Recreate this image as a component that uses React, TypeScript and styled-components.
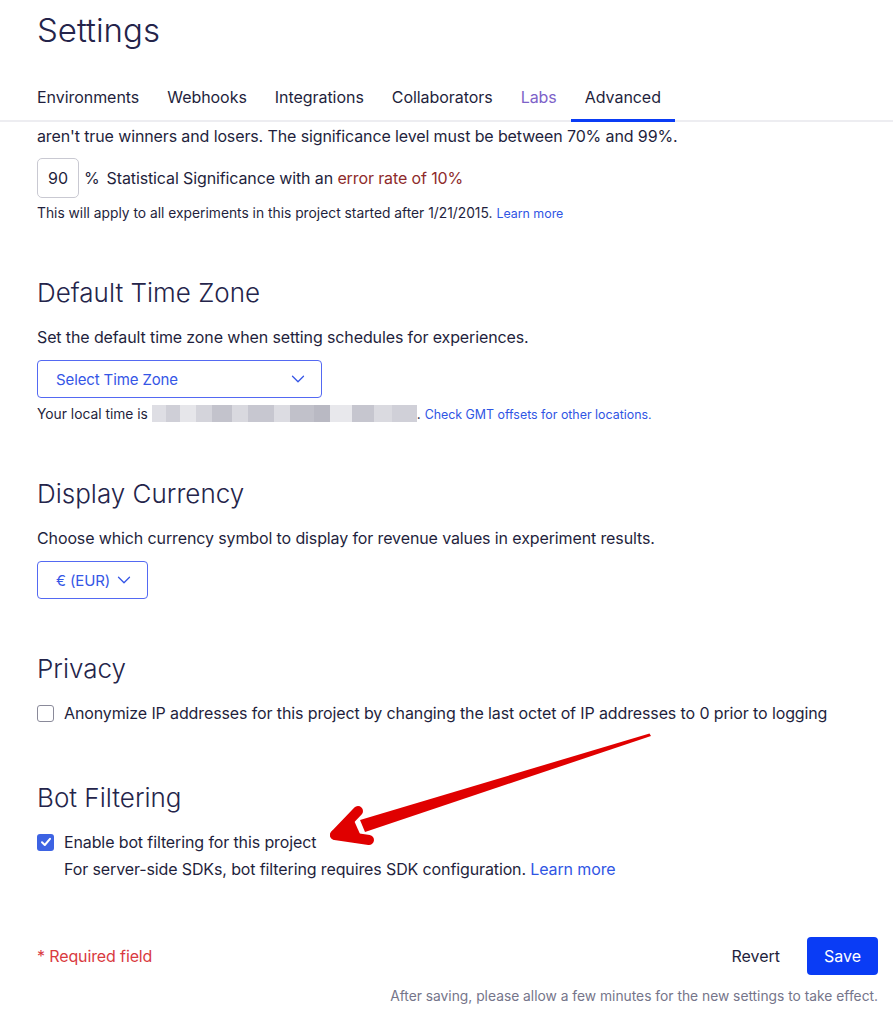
import React from 'react';
import styled, { createGlobalStyle } from 'styled-components';
import { ChevronDown } from 'lucide-react';

const GlobalStyle = createGlobalStyle`
  html, body {
    margin: 0;
    padding: 0;
    background: #ffffff;
  }
  body {
    font-family: Inter, "Noto Sans", "Liberation Sans", sans-serif;
    color: #1f1f3d;
    letter-spacing: -0.12px;
    -webkit-font-smoothing: antialiased;
  }
`;

const Page = styled.div`
  position: relative;
  width: 893px;
  height: 1024px;
  overflow: hidden;
  background: #fff;
`;

const Title = styled.h1`
  margin: 0;
  padding: 10px 0 0 37px;
  font-size: 33px;
  line-height: 40px;
  font-weight: 300;
  letter-spacing: 0;
  color: #24244a;
`;

const TabBar = styled.nav`
  display: flex;
  margin-top: 35px;
  padding-left: 23px;
  box-shadow: inset 0 -2px 0 #ededf1;
`;

const Tab = styled.div<{ active?: boolean; tone?: string }>`
  padding: 0 14px 10px;
  font-size: 16px;
  line-height: 24px;
  letter-spacing: -0.05px;
  color: ${p => p.tone || '#1f1f3d'};
  border-bottom: 3px solid ${p => (p.active ? '#0a3cf5' : 'transparent')};
`;

const Content = styled.main`
  padding: 2px 15px 0 37px;
`;

const Text = styled.p`
  margin: 0;
  font-size: 16px;
  line-height: 24px;
`;

const Small = styled.p`
  margin: 0;
  font-size: 13.8px;
  line-height: 18px;
  letter-spacing: 0;
`;

const SmallLink = styled.a`
  color: #2f55e4;
  font-size: 12.4px;
  text-decoration: none;
`;

const Link = styled.a`
  color: #2f55e4;
  text-decoration: none;
`;

const SigRow = styled.div`
  display: flex;
  align-items: center;
  margin: 10px 0 6px;
  font-size: 16px;
`;

const NumberBox = styled.div`
  width: 42px;
  height: 40px;
  box-sizing: border-box;
  border: 1px solid #c9c9d2;
  border-radius: 5px;
  display: flex;
  align-items: center;
  justify-content: center;
`;

const Percent = styled.span`
  margin: 0 7px 0 5px;
`;

const ErrorText = styled.span`
  color: #8e2b2b;
`;

const Section = styled.section<{ spacing?: number }>`
  margin-top: ${p => p.spacing ?? 54}px;
`;

const Heading = styled.h2`
  margin: 0 0 16px;
  font-size: 26px;
  line-height: 32px;
  font-weight: 300;
  letter-spacing: 0;
  color: #24244a;
`;

const Select = styled.div<{ width: number }>`
  width: ${p => p.width}px;
  height: 38px;
  box-sizing: border-box;
  margin: 11px 0 7px;
  padding: 0 12px 0 18px;
  border: 1px solid #5469f2;
  border-radius: 4px;
  display: flex;
  align-items: center;
  justify-content: space-between;
  color: #3556e6;
  font-size: 15px;
`;

const Blur = styled.span`
  display: inline-block;
  vertical-align: middle;
  width: 265px;
  height: 17px;
  margin-top: -3px;
  background:
    linear-gradient(90deg,
      #dedee4 0 14px, #cfcfd7 14px 28px, #e6e6ea 28px 44px, #d4d4db 44px 60px,
      #c3c3cc 60px 80px, #d9d9df 80px 96px, #c7c7d0 96px 122px, #dcdce2 122px 138px,
      #c1c1ca 138px 162px, #b9b9c3 162px 178px, #e8e8ec 178px 200px, #c6c6cf 200px 222px,
      #dadae0 222px 240px, #d0d0d8 240px 265px);
`;

const CheckRow = styled.label`
  display: flex;
  align-items: center;
  gap: 10px;
  font-size: 16px;
  line-height: 24px;
`;

const Box = styled.span<{ checked?: boolean }>`
  width: 17px;
  height: 17px;
  box-sizing: border-box;
  border-radius: 3px;
  border: ${p => (p.checked ? 'none' : '1.5px solid #8a8a9a')};
  background: ${p => (p.checked ? '#3d63e3' : '#fff')};
  display: flex;
  align-items: center;
  justify-content: center;
`;

const Hint = styled(Text)`
  margin-top: 3px;
  padding-left: 27px;
`;

const Footer = styled.footer`
  margin-top: 56px;
  display: flex;
  flex-direction: column;
`;

const FooterRow = styled.div`
  display: flex;
  align-items: center;
  justify-content: space-between;
`;

const Required = styled.span`
  color: #d93a3f;
  font-size: 16px;
`;

const Actions = styled.div`
  display: flex;
  align-items: center;
  gap: 27px;
`;

const TextButton = styled.button`
  border: none;
  background: none;
  padding: 0;
  font: inherit;
  font-size: 16px;
  color: #1f1f3d;
`;

const PrimaryButton = styled.button`
  width: 71px;
  height: 38px;
  border: none;
  border-radius: 4px;
  background: #0a3cf5;
  color: #fff;
  font: inherit;
  font-size: 16px;
`;

const Note = styled.p`
  margin: 12px 0 0;
  text-align: right;
  font-size: 13.8px;
  line-height: 18px;
  letter-spacing: 0;
  color: #75758a;
`;

const Arrow = styled.svg`
  position: absolute;
  left: 0;
  top: 0;
  pointer-events: none;
`;

const tabs = ['Environments', 'Webhooks', 'Integrations', 'Collaborators', 'Labs', 'Advanced'];

export default function App() {
  return (
    <Page>
      <GlobalStyle />
      <Title>Settings</Title>
      <TabBar>
        {tabs.map(t => (
          <Tab key={t} active={t === 'Advanced'} tone={t === 'Labs' ? '#7d62c8' : undefined}>
            {t}
          </Tab>
        ))}
      </TabBar>
      <Content>
        <Text>aren't true winners and losers. The significance level must be between 70% and 99%.</Text>
        <SigRow>
          <NumberBox>90</NumberBox>
          <Percent>%</Percent>
          <span>
            Statistical Significance with an <ErrorText>error rate of 10%</ErrorText>
          </span>
        </SigRow>
        <Small>
          This will apply to all experiments in this project started after 1/21/2015.{' '}
          <SmallLink href="#">Learn more</SmallLink>
        </Small>

        <Section>
          <Heading>Default Time Zone</Heading>
          <Text>Set the default time zone when setting schedules for experiences.</Text>
          <Select width={285}>
            Select Time Zone
            <ChevronDown size={22} strokeWidth={1.4} />
          </Select>
          <Small>
            Your local time is <Blur />. <SmallLink href="#">Check GMT offsets for other locations.</SmallLink>
          </Small>
        </Section>

        <Section>
          <Heading>Display Currency</Heading>
          <Text>Choose which currency symbol to display for revenue values in experiment results.</Text>
          <Select width={111}>
            € (EUR)
            <ChevronDown size={22} strokeWidth={1.4} />
          </Select>
        </Section>

        <Section>
          <Heading>Privacy</Heading>
          <CheckRow>
            <Box />
            Anonymize IP addresses for this project by changing the last octet of IP addresses to 0 prior to logging
          </CheckRow>
        </Section>

        <Section spacing={57}>
          <Heading>Bot Filtering</Heading>
          <CheckRow>
            <Box checked>
              <svg width="12" height="12" viewBox="0 0 12 12">
                <path d="M2 6.3 L4.8 9 L10 2.8" fill="none" stroke="#fff" strokeWidth="2" strokeLinecap="round" strokeLinejoin="round" />
              </svg>
            </Box>
            Enable bot filtering for this project
          </CheckRow>
          <Hint>
            For server-side SDKs, bot filtering requires SDK configuration. <Link href="#">Learn more</Link>
          </Hint>
        </Section>

        <Footer>
          <FooterRow>
            <Required>* Required field</Required>
            <Actions>
              <TextButton>Revert</TextButton>
              <PrimaryButton>Save</PrimaryButton>
            </Actions>
          </FooterRow>
          <Note>After saving, please allow a few minutes for the new settings to take effect.</Note>
        </Footer>
      </Content>

      <Arrow width="893" height="1024" viewBox="0 0 893 1024">
        <polygon points="651,736 649.5,733.5 360,820 365,832" fill="#e00000" />
        <polygon points="333,836 352,816 360,834" fill="#e00000" />
        <g stroke="#e00000" strokeWidth="10" strokeLinecap="round" fill="none">
          <line x1="335" y1="835" x2="358" y2="811" />
          <line x1="335" y1="835" x2="369" y2="840" />
        </g>
      </Arrow>
    </Page>
  );
}
